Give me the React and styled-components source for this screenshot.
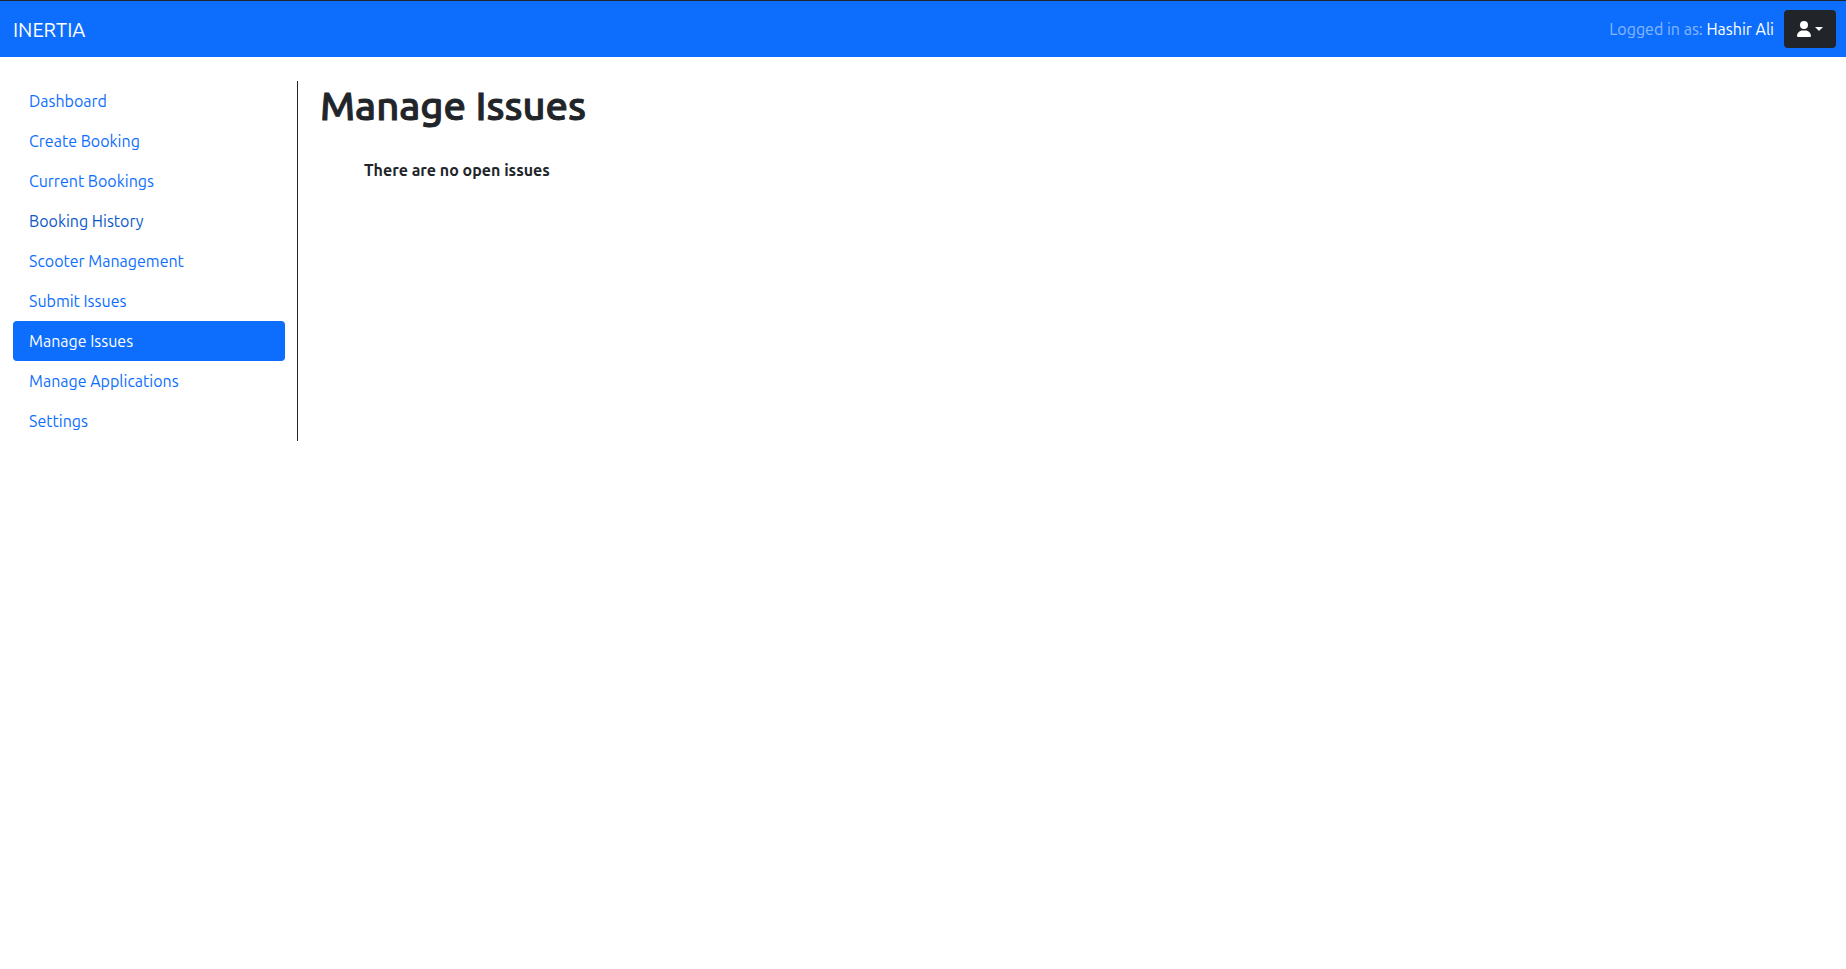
import React from "react";
import styled, { createGlobalStyle } from "styled-components";
import { FaUser } from "react-icons/fa6";

const GlobalStyle = createGlobalStyle`
  *, *::before, *::after { box-sizing: border-box; }
  body {
    margin: 0;
    background: #fff;
    color: #212529;
    font-family: Ubuntu, "Noto Sans", sans-serif;
    font-size: 16px;
    line-height: 24px;
  }
`;

const Navbar = styled.header`
  display: flex;
  align-items: center;
  justify-content: space-between;
  padding: 9px 10px 9px 13px;
  border-top: 1px solid #212529;
  background: #0d6efd;
`;

const Brand = styled.a`
  padding-top: 2px;
  color: #fff;
  font-size: 20px;
  line-height: 30px;
  text-decoration: none;
`;

const Account = styled.div`
  display: flex;
  align-items: center;
  gap: 10px;
`;

const LoginText = styled.span`
  color: rgba(255, 255, 255, 0.5);
`;

const UserName = styled.a`
  color: #fff;
  text-decoration: none;
`;

const MenuButton = styled.button`
  display: flex;
  align-items: center;
  gap: 4px;
  height: 38px;
  padding: 0 13px;
  border: 0;
  border-radius: 4px;
  background: #212529;
  color: #fff;
  cursor: pointer;
`;

const UserIcon = styled(FaUser)`
  width: 14px;
  height: 16px;
`;

const Caret = styled.span`
  border-top: 4px solid currentColor;
  border-right: 4px solid transparent;
  border-left: 4px solid transparent;
`;

const Layout = styled.div`
  display: flex;
  align-items: flex-start;
  padding: 24px 13px 0;
`;

const Sidebar = styled.nav`
  flex: 0 0 285px;
  padding-right: 12px;
  border-right: 1px solid #212529;
`;

const NavList = styled.ul`
  margin: 0;
  padding: 0;
  list-style: none;
`;

const NavLink = styled.a`
  display: block;
  padding: 8px 16px;
  border-radius: 4px;
  background: ${(p) => (p.$active ? "#0d6efd" : "transparent")};
  color: ${(p) => (p.$active ? "#fff" : p.$dark ? "#0a58ca" : "#0d6efd")};
  text-decoration: none;
`;

const Main = styled.main`
  flex: 1;
  min-width: 0;
  padding-left: 22px;
`;

const Title = styled.h1`
  margin: 0 0 16px;
  font-size: 40px;
  font-weight: 500;
  line-height: 50px;
  -webkit-text-stroke: 1px currentColor;
`;

const EmptyMessage = styled.p`
  margin: 0;
  padding: 11px 44px;
  font-family: "Ubuntu Medium", Ubuntu, "Noto Sans", sans-serif;
  font-weight: 600;
`;

const links = [
  "Dashboard",
  "Create Booking",
  "Current Bookings",
  "Booking History",
  "Scooter Management",
  "Submit Issues",
  "Manage Issues",
  "Manage Applications",
  "Settings",
];

export default function App() {
  return (
    <>
      <GlobalStyle />
      <Navbar>
        <Brand href="#">INERTIA</Brand>
        <Account>
          <LoginText>
            Logged in as: <UserName href="#">Hashir Ali</UserName>
          </LoginText>
          <MenuButton type="button" aria-label="Account menu">
            <UserIcon />
            <Caret />
          </MenuButton>
        </Account>
      </Navbar>
      <Layout>
        <Sidebar>
          <NavList>
            {links.map((label) => (
              <li key={label}>
                <NavLink
                  href="#"
                  $active={label === "Manage Issues"}
                  $dark={label === "Booking History"}
                >
                  {label}
                </NavLink>
              </li>
            ))}
          </NavList>
        </Sidebar>
        <Main>
          <Title>Manage Issues</Title>
          <EmptyMessage>There are no open issues</EmptyMessage>
        </Main>
      </Layout>
    </>
  );
}
